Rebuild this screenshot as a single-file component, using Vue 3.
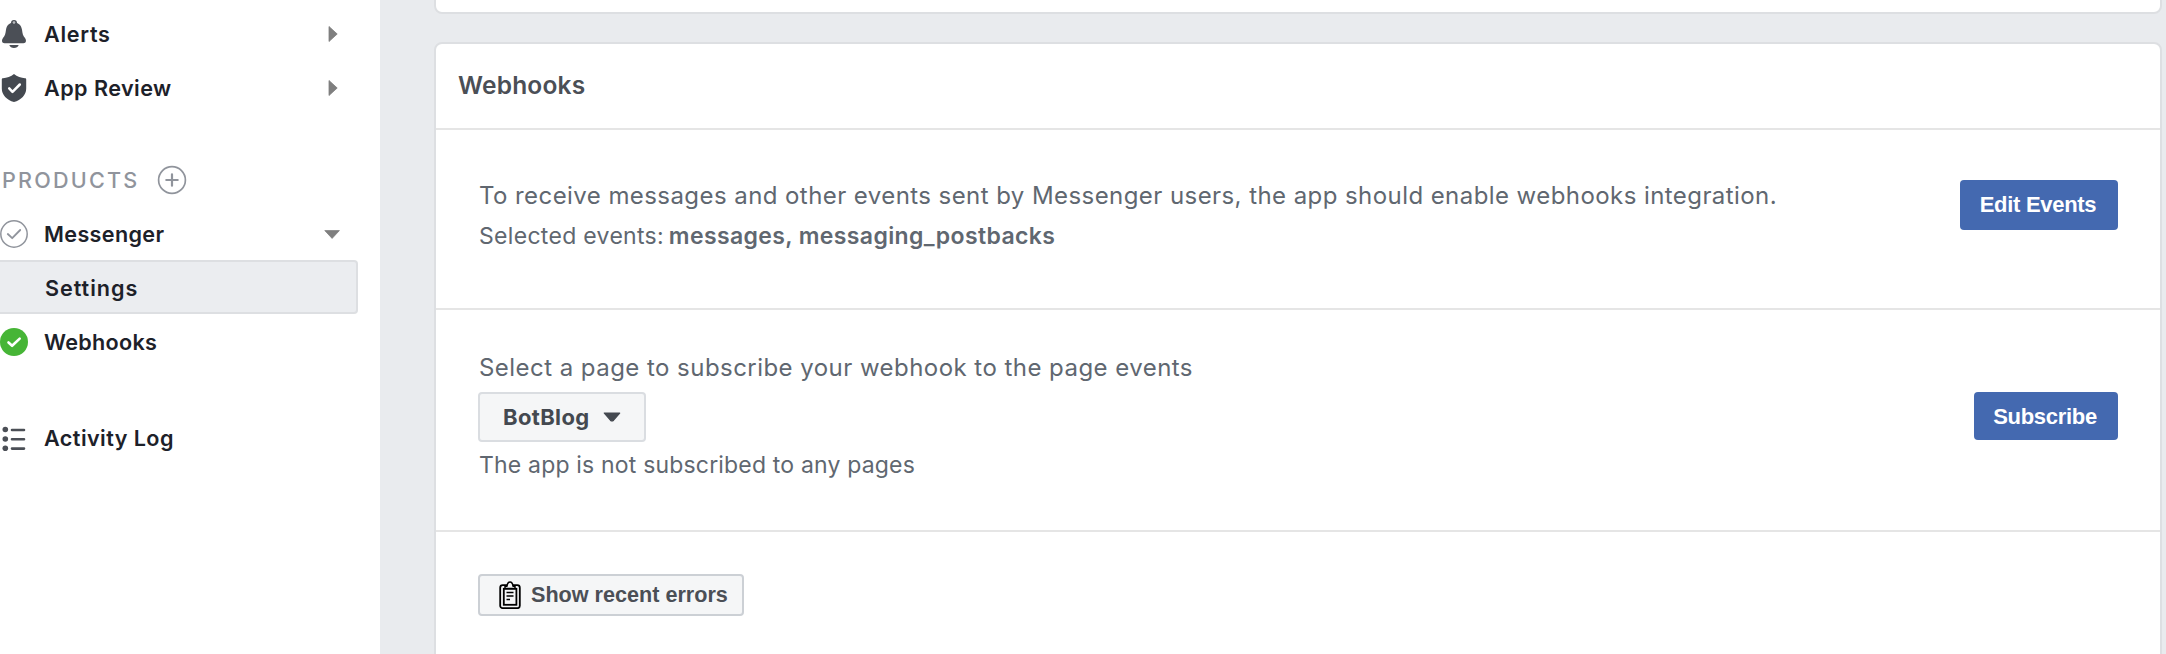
<script setup>
const tools = [
  { label: 'Alerts', icon: 'bell', cls: 'sp-alerts' },
  { label: 'App Review', icon: 'shield', cls: 'sp-review' }
]
</script>

<template>
  <div class="page">
    <aside class="sidebar">
      <div v-for="t in tools" :key="t.label" class="row">
        <svg v-if="t.icon === 'bell'" class="icon" viewBox="0 0 28 30">
          <circle cx="14" cy="4" r="2.2" fill="none" stroke="#4b4f56" stroke-width="1.6" />
          <path d="M14 3.6c-4.6 0-7.4 3-8 7.2-.5 4-.9 5.600-3 8.200C1.300 21.400 1.800 24.200 4.600 24.200h18.800c2.800 0 3.300-2.800 1.600-5.200-2.100-2.600-2.500-4.200-3-8.200-.6-4.200-3.400-7.200-8-7.200z" fill="#4b4f56" />
          <circle cx="14" cy="3.800" r="1.100" fill="#b9bbbe" />
          <path d="M9.300 26h9.400c-.6 1.900-2.400 3-4.700 3s-4.100-1.100-4.700-3z" fill="#4b4f56" />
        </svg>
        <svg v-else class="icon" viewBox="0 0 28 30">
          <path d="M14 1c3 2.600 7.300 4.100 11 4.200.8 0 1.200.4 1.200 1.200v9c0 6.600-5 11.400-12.200 13.600C6.800 26.800 1.800 22 1.800 15.400v-9c0-.8.4-1.200 1.200-1.200C6.700 5.100 11 3.600 14 1z" fill="#444950" />
          <path d="M9.200 15.400l3.300 3.500 7.300-7.400" fill="none" stroke="#fff" stroke-width="2.500" stroke-linecap="round" stroke-linejoin="round" />
        </svg>
        <span class="label" :class="t.cls">{{ t.label }}</span>
        <svg class="arrow" viewBox="0 0 18 18"><path d="M6 1.500L14.200 9 6 16.500z" fill="#7f7f7f" stroke="#7f7f7f" stroke-width=".8" stroke-linejoin="round" /></svg>
      </div>

      <div class="row products">
        <span class="heading">PRODUCTS</span>
        <svg class="plus" viewBox="0 0 30 30">
          <circle cx="15" cy="15" r="13.400" fill="none" stroke="#90949c" stroke-width="1.700" />
          <path d="M9.300 15h11.400M15 9.300v11.400" stroke="#90949c" stroke-width="2.200" stroke-linecap="round" />
        </svg>
      </div>

      <div class="row">
        <svg class="icon" viewBox="0 0 28 30">
          <circle cx="14" cy="15" r="13.200" fill="none" stroke="#90949c" stroke-width="1.500" />
          <path d="M7.800 15l4.400 4.200 8-8.200" fill="none" stroke="#90949c" stroke-width="1.800" stroke-linecap="round" stroke-linejoin="round" />
        </svg>
        <span class="label sp-messenger">Messenger</span>
        <svg class="arrow" viewBox="0 0 18 18"><path d="M1.800 5.600h14.600L9.100 13.400z" fill="#7f7f7f" stroke="#7f7f7f" stroke-width=".8" stroke-linejoin="round" /></svg>
      </div>

      <div class="row selected"><span class="label sp-settings">Settings</span></div>

      <div class="row">
        <svg class="icon" viewBox="0 0 28 30">
          <circle cx="14" cy="15" r="14" fill="#46b536" />
          <path d="M8.500 15.500l3.600 3.300 7.600-7.200" fill="none" stroke="#fff" stroke-width="2.600" stroke-linecap="round" stroke-linejoin="round" />
        </svg>
        <span class="label sp-webhooks">Webhooks</span>
      </div>

      <div class="row activity">
        <svg class="icon" viewBox="0 0 28 30">
          <g fill="#4b4f56"><circle cx="5.300" cy="6.500" r="2.800" /><circle cx="5.300" cy="16" r="2.800" /><circle cx="5.300" cy="25.300" r="2.800" /></g>
          <path d="M12 7h12M12 16.300h12M12 25.600h12" stroke="#4b4f56" stroke-width="2.600" stroke-linecap="round" />
        </svg>
        <span class="label sp-activity">Activity Log</span>
      </div>
    </aside>

    <main class="main">
      <section class="card previous"></section>
      <section class="card webhooks">
        <header class="card-head"><h2>Webhooks</h2></header>

        <div class="block events">
          <div class="copy">
            <p class="lead sp-lead">To receive messages and other events sent by Messenger users, the app should enable webhooks integration.</p>
            <p class="note sp-note">Selected events: <strong>messages, messaging_postbacks</strong></p>
          </div>
          <button class="primary edit">Edit Events</button>
        </div>

        <div class="block subscribe">
          <div class="copy">
            <p class="lead sp-select">Select a page to subscribe your webhook to the page events</p>
            <button class="select">
              <span>BotBlog</span>
              <svg class="caret" viewBox="0 0 18 10"><path d="M1.300 1h15.400L10.600 8.200q-1.600 1.400-3.200 0z" fill="#444950" stroke="#444950" stroke-width="1.200" stroke-linejoin="round" /></svg>
            </button>
            <p class="note sp-status">The app is not subscribed to any pages</p>
          </div>
          <button class="primary sub">Subscribe</button>
        </div>

        <div class="block errors">
          <button class="secondary">
            <svg class="clip" viewBox="0 0 22 28" fill="none" stroke="#000">
              <rect x="1.200" y="4.200" width="19.600" height="23" rx="2.500" stroke-width="1.800" />
              <rect x="4.800" y="7.800" width="12.600" height="16" stroke-width="1.800" />
              <path d="M6 7.600V5.200h2C8.300 2.400 9.300 1 11 1s2.700 1.400 3 4.200h2v2.400z" fill="#f5f6f7" stroke-width="1.500" stroke-linejoin="round" />
              <path d="M7.500 11.500h7M7.500 14.900h7M7.500 18.400h3.500" stroke-width="1.500" />
            </svg>
            <span>Show recent errors</span>
          </button>
        </div>
      </section>
    </main>
  </div>
</template>

<style>
body {
  margin: 0;
  overflow: hidden;
}
</style>

<style scoped>
.page {
  display: flex;
  width: 2166px;
  height: 654px;
  overflow: hidden;
  background: #e9ebee;
  font-family: Inter, "Liberation Sans", sans-serif;
}
.sidebar {
  box-sizing: border-box;
  width: 380px;
  padding-top: 7px;
  background: #fff;
  flex: none;
}
.row {
  display: flex;
  align-items: center;
  box-sizing: border-box;
  height: 54px;
}
.icon {
  width: 28px;
  height: 30px;
  flex: none;
  margin-right: 16px;
}
.label {
  font-size: 21.6px;
  font-weight: 600;
  line-height: 54px;
  color: #1d2129;
  flex: 1;
  white-space: nowrap;
}
.arrow {
  width: 18px;
  height: 18px;
  margin-right: 39px;
}
.products {
  margin-top: 38px;
}
.heading {
  font-size: 21.6px;
  font-weight: 500;
  letter-spacing: 2.2px;
  color: #90949c;
  margin-left: 2px;
}
.plus {
  width: 30px;
  height: 30px;
  margin-left: 18px;
}
.selected {
  width: 358px;
  padding-left: 45px;
  margin-top: -1px;
  margin-bottom: 1px;
  border: 2px solid #dddfe2;
  border-left: 0;
  border-radius: 0 4px 4px 0;
  background: #ebedf0;
}
.selected .label {
  padding-top: 2px;
}
.activity {
  margin-top: 42px;
}
.main {
  flex: 1;
  padding: 0 4px 0 54px;
}
.card {
  box-sizing: border-box;
  border: 2px solid #dddfe2;
  border-radius: 8px;
  background: #fff;
}
.previous {
  height: 34px;
  margin-top: -20px;
  margin-bottom: 28px;
}
.webhooks {
  height: 640px;
}
.card-head {
  box-sizing: border-box;
  height: 86px;
  padding-left: 22px;
  border-bottom: 2px solid #e5e5e5;
}
h2 {
  margin: 0;
  font-size: 24.5px;
  font-weight: 600;
  line-height: 82px;
  letter-spacing: 0.2px;
  color: #4b4f56;
}
.block {
  box-sizing: border-box;
  display: flex;
  justify-content: space-between;
  align-items: flex-start;
  padding: 0 42px;
  border-bottom: 2px solid #e5e5e5;
}
.events {
  height: 180px;
  padding-top: 45px;
}
.subscribe {
  height: 222px;
  padding-top: 37px;
}
.errors {
  border-bottom: 0;
  padding-top: 42px;
}
p {
  margin: 0;
  color: #606770;
  white-space: nowrap;
}
.copy {
  display: flex;
  flex-direction: column;
  align-items: flex-start;
}
.lead {
  font-size: 24px;
  line-height: 41px;
  padding-left: 1px;
}
.note {
  font-size: 23px;
  line-height: 41px;
  padding-left: 1px;
}
.note strong {
  font-weight: 600;
  letter-spacing: 0.386px;
  margin-left: -2px;
}
button {
  box-sizing: border-box;
  display: flex;
  align-items: center;
  margin: 0;
  padding: 0;
  font-family: "Liberation Sans", Arial, sans-serif;
  font-weight: 700;
  font-size: 22px;
  white-space: nowrap;
}
.primary {
  justify-content: center;
  border: 0;
  border-radius: 4px;
  background: #4469b0;
  color: #fff;
  letter-spacing: -0.3px;
  padding-right: 2px;
}
.edit {
  width: 158px;
  height: 50px;
  margin-top: 5px;
}
.sub {
  width: 144px;
  height: 48px;
  margin-top: 45px;
  padding-top: 1px;
}
.select {
  width: 168px;
  height: 50px;
  margin: 4px 0 3px;
  padding-left: 23px;
  border: 2px solid #dadde1;
  border-radius: 4px;
  background: #f5f6f7;
  color: #444950;
  font-family: Inter, sans-serif;
  letter-spacing: 0.35px;
}
.caret {
  width: 18px;
  height: 10px;
  margin-left: 13px;
}
.secondary {
  width: 266px;
  height: 42px;
  padding-left: 19px;
  border: 2px solid #ccd0d5;
  border-radius: 4px;
  background: #f5f6f7;
  color: #4b4f56;
  font-size: 21.6px;
}
.clip {
  width: 22px;
  height: 28px;
  margin-right: 10px;
  margin-bottom: 1px;
}
.sp-alerts { letter-spacing: 0.7px; }
.sp-review { letter-spacing: 0.45px; }
.sp-messenger { letter-spacing: 0.35px; }
.sp-settings { letter-spacing: 0.95px; }
.sp-webhooks { letter-spacing: 0.3px; }
.sp-activity { letter-spacing: 0.43px; }
.sp-lead { letter-spacing: 0.43px; }
.sp-note { letter-spacing: 0.31px; }
.sp-select { letter-spacing: 0.456px; }
.sp-status { letter-spacing: 0.18px; }
</style>
